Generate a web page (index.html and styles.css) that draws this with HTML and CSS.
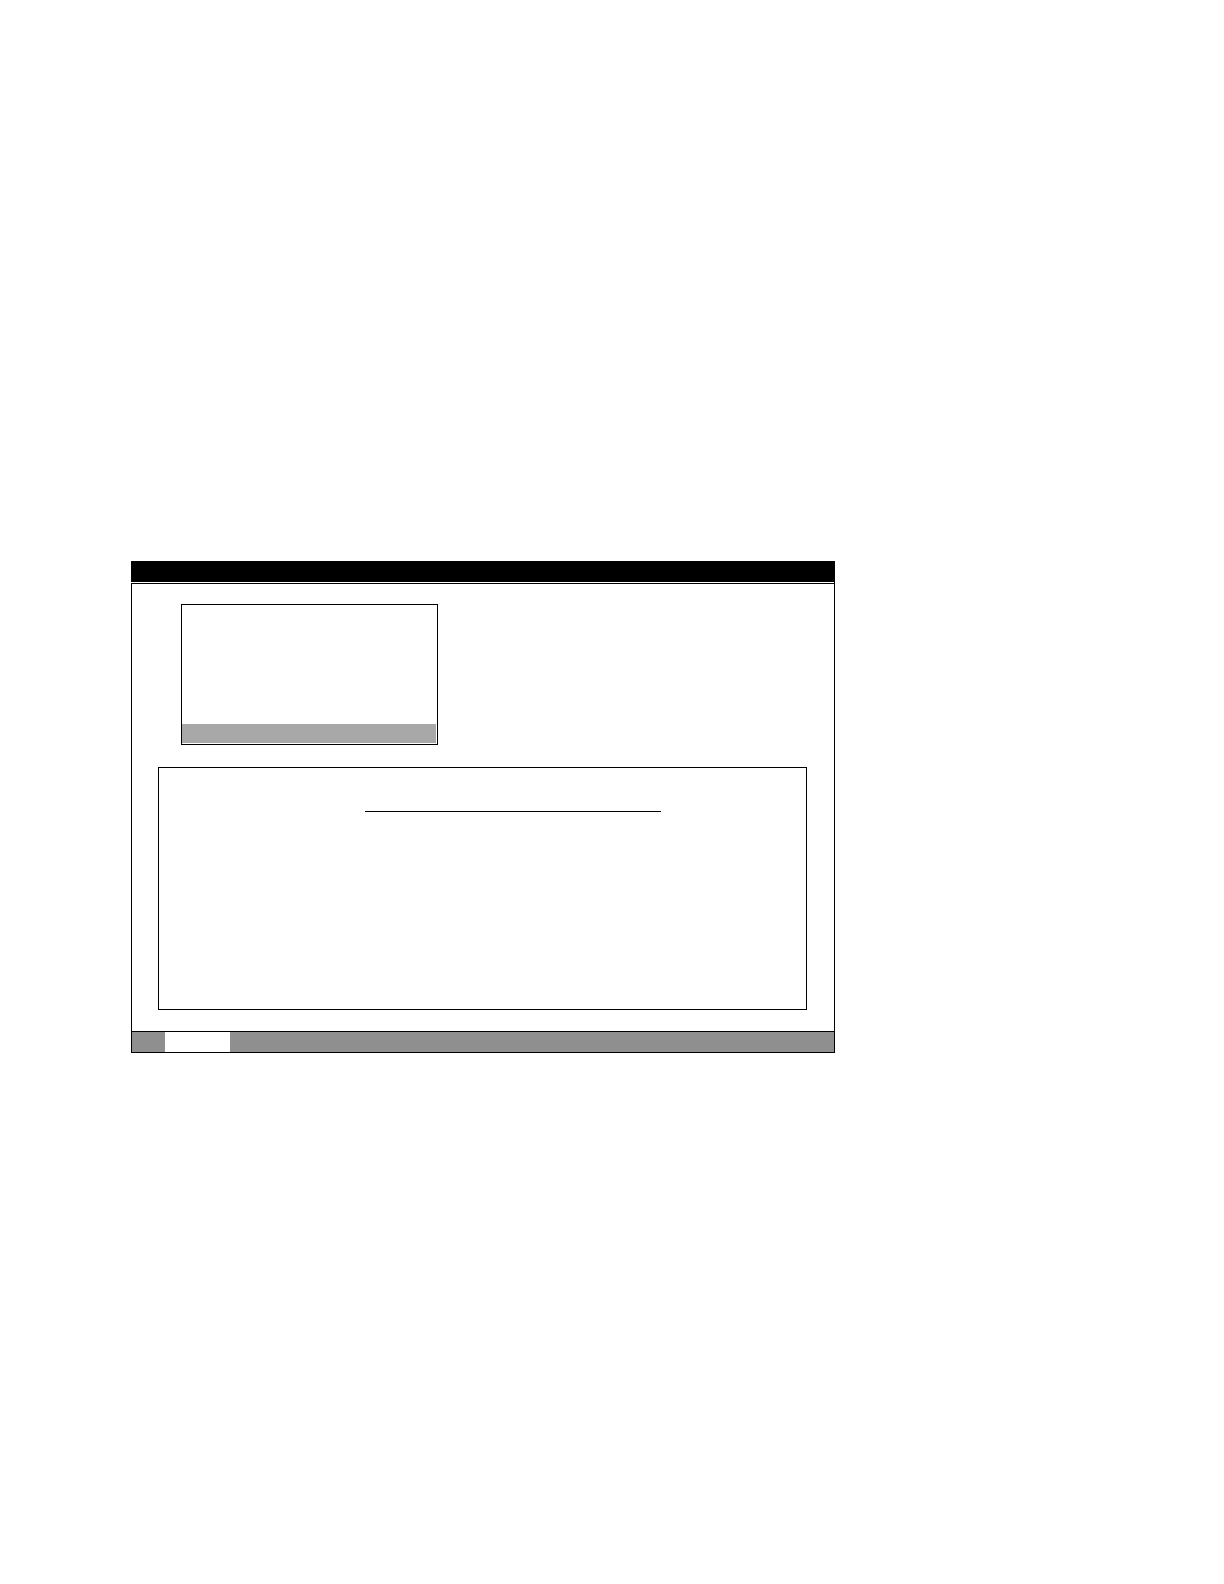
FILE: index.html
```html
<!DOCTYPE html>
<html lang="en">
<head>
<meta charset="utf-8">
<title>Window</title>
<link rel="stylesheet" href="styles.css">
</head>
<body>
<div class="page">
  <div class="window">
    <div class="titlebar"></div>
    <div class="content">
      <div class="listbox">
        <div class="list-items"></div>
        <div class="list-selected"></div>
      </div>
      <div class="panel">
        <div class="panel-heading"></div>
      </div>
    </div>
    <div class="statusbar">
      <div class="status-seg status-left"></div>
      <div class="status-seg status-active"></div>
      <div class="status-seg status-fill"></div>
    </div>
  </div>
</div>
</body>
</html>
```

FILE: styles.css
```css
html, body {
  margin: 0;
  background: #fff;
  font-family: "Liberation Sans", Arial, sans-serif;
}

.page {
  padding: 561px 0 0 131px;
}

.window {
  width: 703px;
  border-right: 1px solid #000;
}

.titlebar {
  height: 21px;
  background: #000;
}

.content {
  margin-top: 1px;
  border-top: 1px solid #000;
  border-left: 1px solid #000;
  padding: 20px 0 21px 0;
}

.listbox {
  box-sizing: border-box;
  margin-left: 49px;
  width: 257px;
  height: 141px;
  border: 1px solid #000;
  display: flex;
  flex-direction: column;
}

.list-items {
  flex: 1;
}

.list-selected {
  height: 19px;
  margin: 0 1px 1px 0;
  background: #a8a8a8;
}

.panel {
  box-sizing: border-box;
  margin-top: 22px;
  margin-left: 26px;
  width: 649px;
  height: 243px;
  border: 1px solid #000;
  padding-top: 43px;
}

.panel-heading {
  margin-left: 206px;
  width: 296px;
  height: 0;
  border-bottom: 1px solid #000;
}

.statusbar {
  display: flex;
  height: 20px;
  border-top: 1px solid #000;
  border-bottom: 1px solid #000;
  border-left: 1px solid #000;
}

.status-seg {
  height: 100%;
}

.status-left {
  width: 33px;
  background: #8f8f8f;
}

.status-active {
  width: 65px;
  background: #fff;
}

.status-fill {
  flex: 1;
  background: #8f8f8f;
}
```
